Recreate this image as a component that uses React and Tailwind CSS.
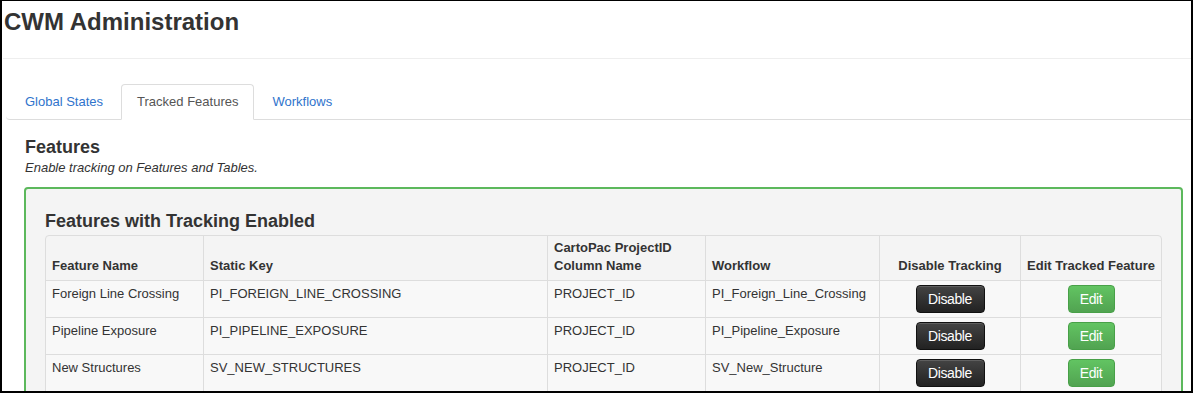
import React from "react";

const rows = [
  ["Foreign Line Crossing", "PI_FOREIGN_LINE_CROSSING", "PROJECT_ID", "PI_Foreign_Line_Crossing"],
  ["Pipeline Exposure", "PI_PIPELINE_EXPOSURE", "PROJECT_ID", "PI_Pipeline_Exposure"],
  ["New Structures", "SV_NEW_STRUCTURES", "PROJECT_ID", "SV_New_Structure"],
];

function Th({ children, first, center }) {
  return (
    <div
      className={
        "flex items-end pb-[5px] px-[6px] font-bold leading-[18px] " +
        (first ? "" : "border-l border-[#ddd] ") +
        (center ? "justify-center text-center" : "")
      }
    >
      <div>{children}</div>
    </div>
  );
}

function Td({ children, first, center }) {
  return (
    <div
      className={
        "pt-[4px] px-[6px] leading-[18px] border-t border-[#ddd] bg-[#f8f8f8] " +
        (first ? "" : "border-l ") +
        (center ? "flex justify-center items-start" : "")
      }
    >
      {children}
    </div>
  );
}

export default function App() {
  return (
    <div className="w-[1193px] h-[393px] overflow-hidden box-border border-l-2 border-t border-r-2 border-b-2 border-black bg-white text-[#333] font-['Liberation_Sans',Arial,sans-serif]">
      <h1 className="pt-[8px] pl-[2px] text-[24px] leading-[26px] font-bold">CWM Administration</h1>
      <div className="mt-[23px] ml-[1px] border-t border-[#eee]"></div>

      <div className="mt-[25px] ml-[4px] pl-[3px] flex border-b border-[#ddd] rounded-bl-[4px] text-[13px] leading-[20px]">
        <div className="-mb-px mr-[2px] px-[15px] py-[7px] border border-transparent rounded-t-[4px] text-[#2f74cc]">Global States</div>
        <div className="-mb-px mr-[2px] px-[15px] py-[7px] border border-[#ddd] border-b-white rounded-t-[4px] bg-white text-[#555]">Tracked Features</div>
        <div className="-mb-px mr-[2px] px-[15px] py-[7px] border border-transparent rounded-t-[4px] text-[#2f74cc]">Workflows</div>
      </div>

      <div className="pl-[22px] pr-[8px]">
        <h2 className="pt-[17px] pl-px text-[18px] leading-[20px] font-bold">Features</h2>
        <p className="mt-[2px] pl-px text-[13px] leading-[18px] italic">Enable tracking on Features and Tables.</p>

        <div className="mt-[10px] border-2 border-[#5cb85c] rounded-[4px] bg-[#f4f4f4] px-[19px] pt-[22px] pb-[20px]">
          <h3 className="text-[18px] leading-[20px] font-bold mb-[4px]">Features with Tracking Enabled</h3>
          <div className="border border-[#ddd] rounded-t-[4px] text-[13px]">
            <div className="grid grid-cols-[157px_344px_158px_174px_141px_141px] h-[44px]">
              <Th first>Feature Name</Th>
              <Th>Static Key</Th>
              <Th>CartoPac ProjectID<br />Column Name</Th>
              <Th>Workflow</Th>
              <Th center>Disable Tracking</Th>
              <Th center>Edit Tracked Feature</Th>
            </div>
            {rows.map((r, i) => (
              <div key={i} className="grid grid-cols-[157px_344px_158px_174px_141px_141px] h-[37px] border-[#ddd]">
                <Td first>{r[0]}</Td>
                <Td>{r[1]}</Td>
                <Td>{r[2]}</Td>
                <Td>{r[3]}</Td>
                <Td center>
                  <button className="w-[69px] h-[28px] rounded-[4px] border border-[#111] bg-gradient-to-b from-[#444] to-[#222] text-white text-[14px] leading-[20px] tracking-[-0.4px] shadow-[inset_0_1px_0_rgba(255,255,255,0.15)]">
                    Disable
                  </button>
                </Td>
                <Td center>
                  <button className="w-[47px] h-[28px] rounded-[4px] border border-[#48a048] bg-gradient-to-b from-[#62c462] to-[#51a351] text-white text-[14px] leading-[20px] tracking-[-0.4px]">
                    Edit
                  </button>
                </Td>
              </div>
            ))}
          </div>
        </div>
      </div>
    </div>
  );
}
